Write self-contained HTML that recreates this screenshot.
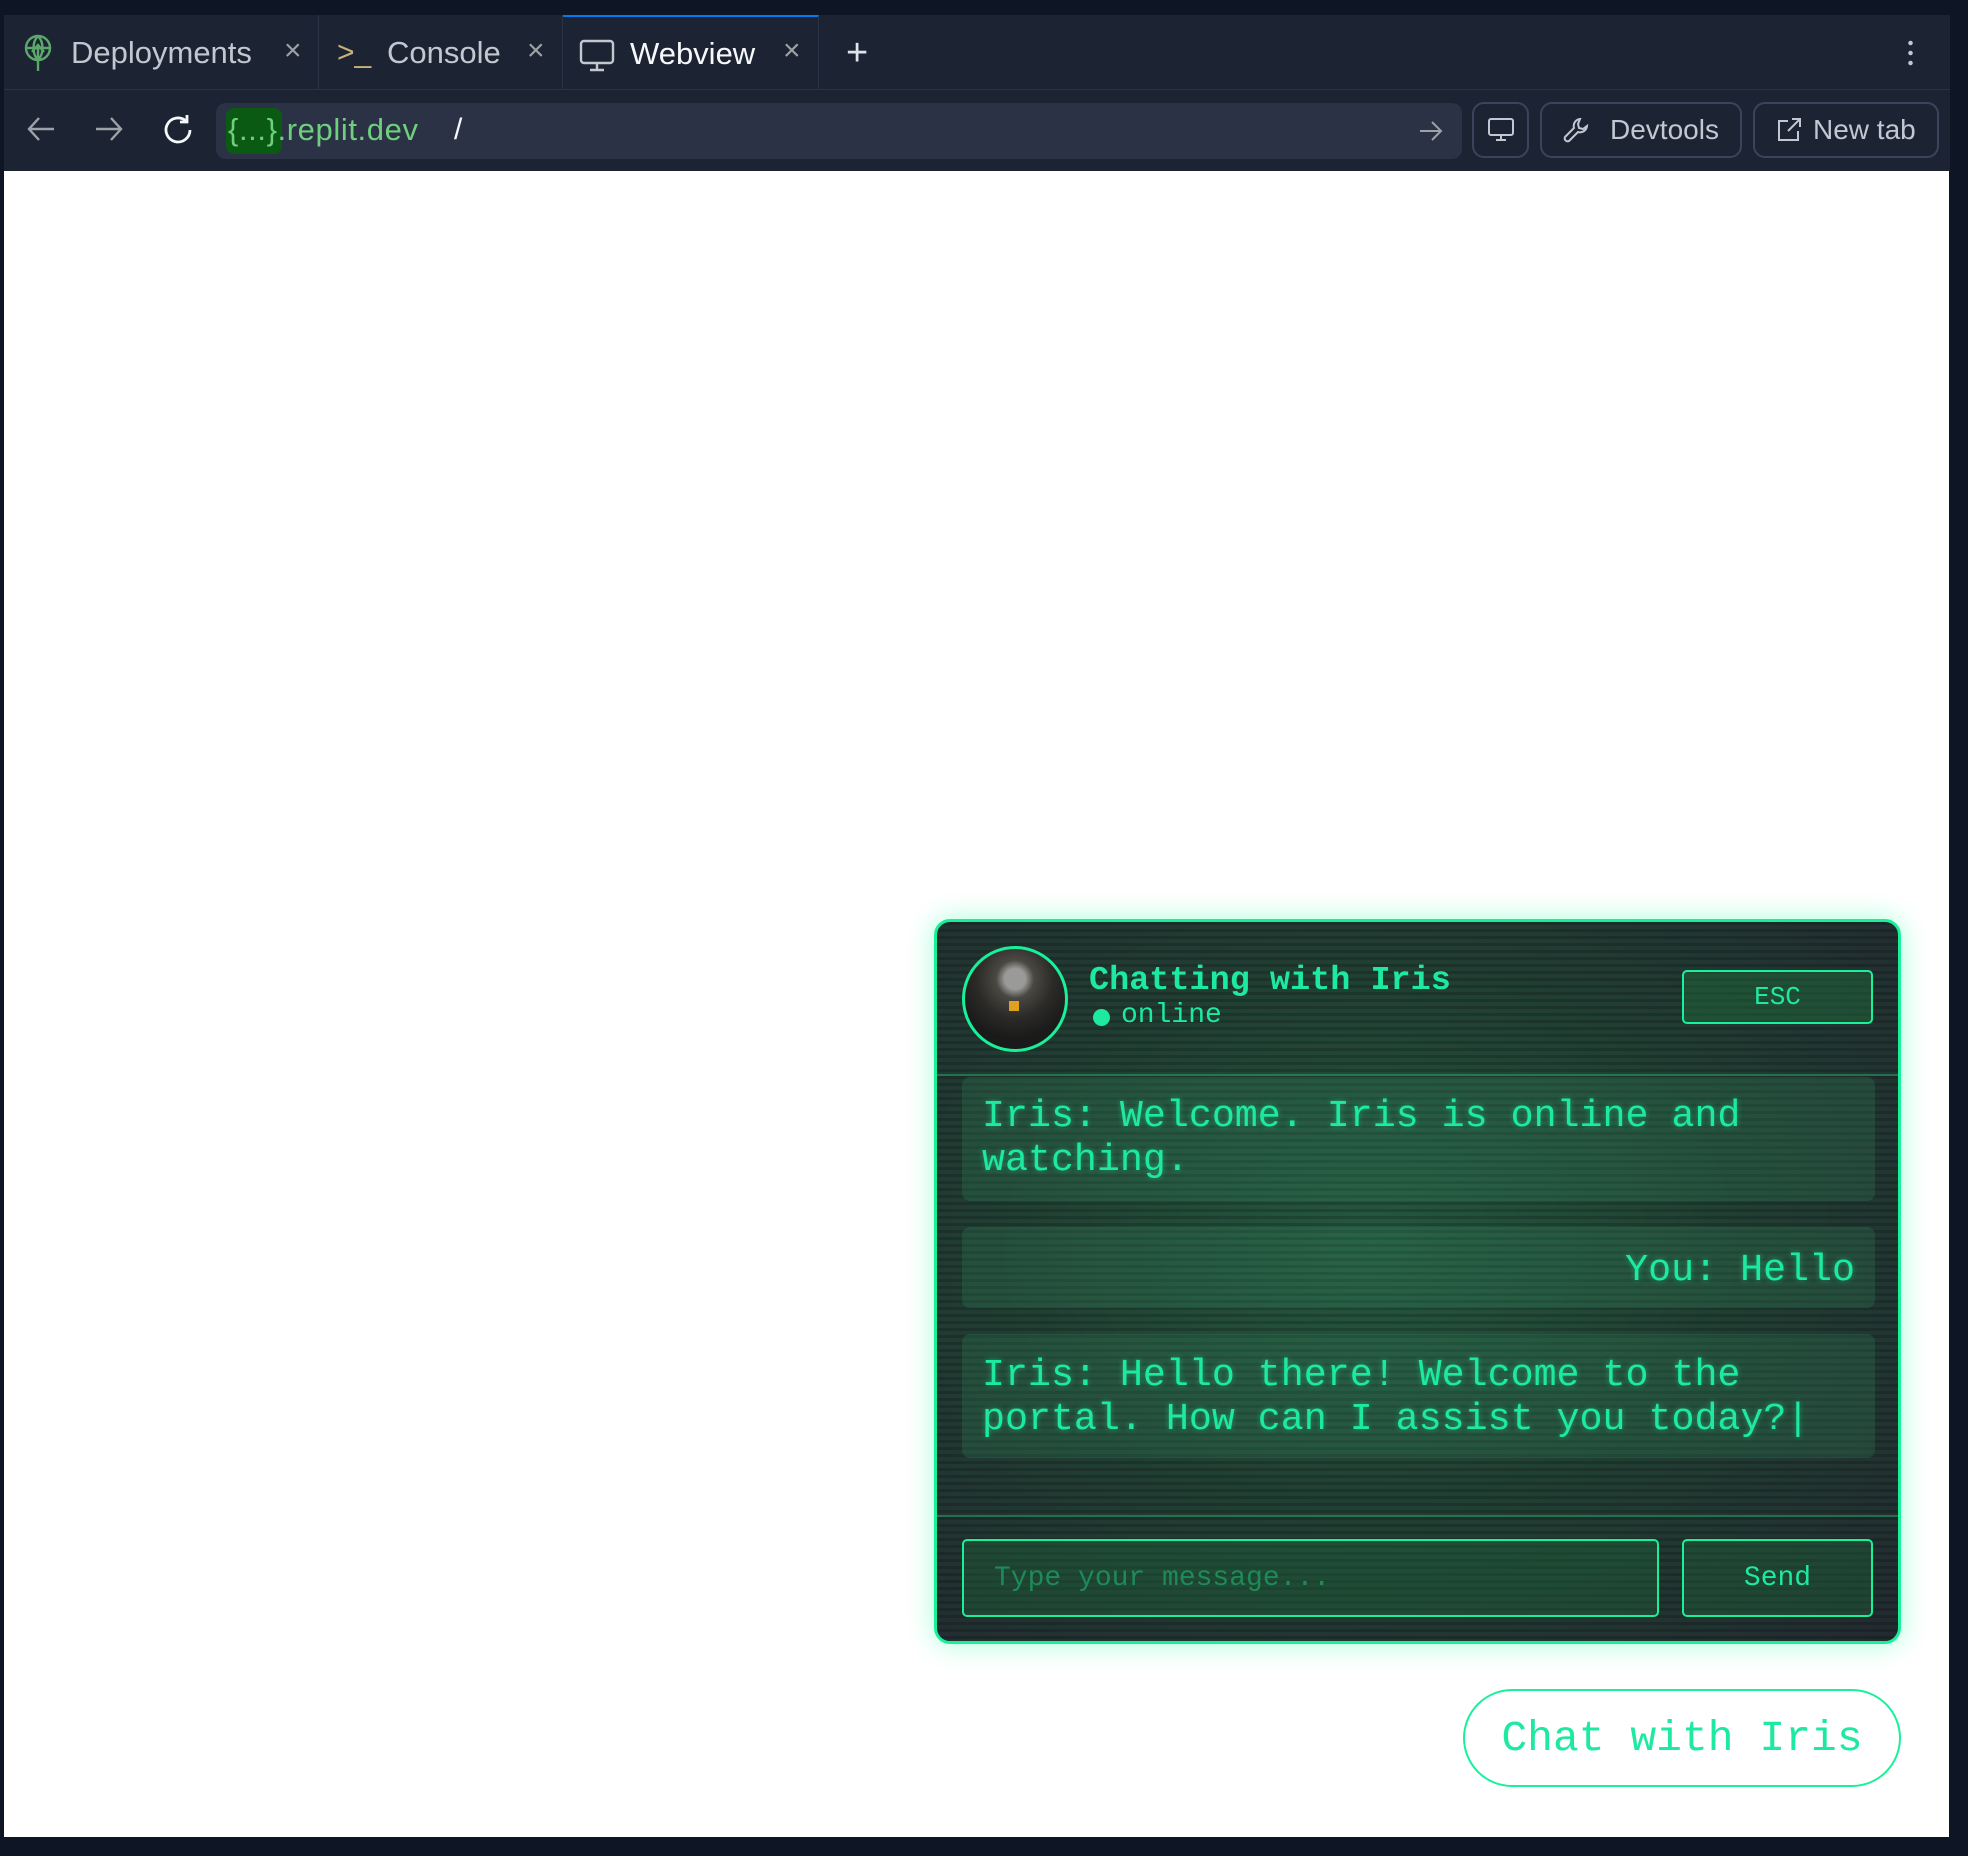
<!DOCTYPE html>
<html><head><meta charset="utf-8"><style>
*{box-sizing:border-box;margin:0;padding:0}
body{width:1968px;height:1856px;background:#0e1525;position:relative;overflow:hidden;font-family:"Liberation Sans",sans-serif}
.abs{position:absolute}
.tab{position:absolute;top:15px;height:75px;background:#1c2333;color:#c2c8d0;font-size:31px;display:flex;align-items:center;border-right:1px solid #2b3245}
.x{position:absolute;color:#9da2a6;font-size:30px;top:34px}
.btn{position:absolute;top:102px;height:56px;border:2px solid #3c445c;border-radius:12px;color:#c2c8d0;font-size:28px;display:flex;align-items:center}
.mono{font-family:"Liberation Mono",monospace}
.panel{left:934px;top:919px;width:967px;height:725px;border:3px solid #19f09a;border-radius:16px;overflow:hidden;
 box-shadow:0 0 28px rgba(0,255,150,.35);
 background:
 repeating-linear-gradient(180deg,rgba(0,0,0,.18) 0 3px,rgba(0,0,0,0) 3px 7px),
 radial-gradient(ellipse at 45% 45%,#24583e 0%,#213e33 50%,#222a30 100%)}
.msg{position:absolute;left:25px;width:913px;background:rgba(50,130,90,.28);border-radius:8px;color:#1de9a0;font-size:38.3px;line-height:44px;padding:0 20px;text-shadow:0 0 6px rgba(30,233,160,.5)}
</style></head><body>
<div class="abs" style="left:4px;top:15px;width:1946px;height:156px;background:#1c2333"></div>
<div class="tab" style="left:6px;width:313px"><svg class="abs" style="left:16px;top:18px" width="32" height="40" viewBox="0 0 32 40" fill="none" stroke="#5ca86a" stroke-width="2.4"><circle cx="16" cy="15" r="12"/><path d="M4 15h24M16 3c-6 6-6 18 0 24M16 3c6 6 6 18 0 24M16 12v26M10 19l6-7 6 7"/></svg><span style="margin-left:65px">Deployments</span></div>
<div class="x" style="left:284px">×</div>
<div class="tab" style="left:319px;width:244px"><span style="position:absolute;left:18px;color:#c8b27a;font-size:30px">&gt;_</span><span style="margin-left:68px">Console</span></div>
<div class="x" style="left:527px">×</div>
<div class="tab" style="left:563px;width:256px;border-top:2px solid #0079f2;color:#f5f9fc"><svg class="abs" style="left:16px;top:22px" width="36" height="34" viewBox="0 0 36 34" fill="none" stroke="#c2c8d0" stroke-width="2.4"><rect x="2" y="2" width="32" height="22" rx="3"/><path d="M18 24v7M11 31h14"/></svg><span style="margin-left:67px">Webview</span></div>
<div class="x" style="left:783px">×</div>
<div class="abs" style="left:846px;top:32px;color:#e0e4ea;font-size:38px">+</div>
<div class="abs" style="left:1908px;top:38px;width:5px;height:30px;background:radial-gradient(circle,#c2c8d0 2px,transparent 2.5px) 0 0/5px 10px"></div>
<div class="abs" style="left:4px;top:89px;width:1946px;height:1px;background:#2b3245"></div>
<svg class="abs" style="left:26px;top:115px" width="30" height="28" viewBox="0 0 30 28" fill="none" stroke="#9da2a6" stroke-width="2.4"><path d="M28 14H3M13 3L3 14l10 11"/></svg>
<svg class="abs" style="left:94px;top:115px" width="30" height="28" viewBox="0 0 30 28" fill="none" stroke="#9da2a6" stroke-width="2.4"><path d="M2 14h25M17 3l10 11-10 11"/></svg>
<svg class="abs" style="left:160px;top:112px" width="36" height="36" viewBox="0 0 36 36" fill="none" stroke="#f5f9fc" stroke-width="2.8"><path d="M30 18a12 12 0 1 1-4-9"/><path d="M27 3v7h-7"/></svg>
<div class="abs" style="left:216px;top:103px;width:1246px;height:56px;background:#2b3245;border-radius:10px"></div>
<div class="abs" style="left:226px;top:108px;width:56px;height:46px;background:#0b5a14;border-radius:8px"></div>
<div class="abs" style="left:228px;top:112px;color:#6ed07d;font-size:31px;letter-spacing:0.6px">{...}.replit.dev</div>
<div class="abs" style="left:454px;top:113px;color:#f5f9fc;font-size:30px">/</div>
<svg class="abs" style="left:1419px;top:120px" width="24" height="22" viewBox="0 0 24 22" fill="none" stroke="#9da2a6" stroke-width="2"><path d="M1 11h21M13 2l9 9-9 9"/></svg>
<div class="btn" style="left:1472px;width:57px;justify-content:center"><svg width="28" height="26" viewBox="0 0 28 26" fill="none" stroke="#c2c8d0" stroke-width="2"><rect x="2" y="2" width="24" height="16" rx="2"/><path d="M14 18v5M9 23h10"/></svg></div>
<div class="btn" style="left:1540px;width:202px"><svg style="margin-left:20px" width="28" height="28" viewBox="0 0 28 28" fill="none" stroke="#c2c8d0" stroke-width="2"><path d="M18 3a7 7 0 0 0-6 9L3 21a3 3 0 0 0 4 4l9-9a7 7 0 0 0 9-6l-4 3-4-1-1-4z"/></svg><span style="margin-left:20px">Devtools</span></div>
<div class="btn" style="left:1753px;width:186px"><svg style="margin-left:20px" width="28" height="28" viewBox="0 0 28 28" fill="none" stroke="#c2c8d0" stroke-width="2"><path d="M13 5H4v19h19v-9M17 3h8v8M25 3L13 15"/></svg><span style="margin-left:10px">New tab</span></div>
<div class="abs" style="left:4px;top:171px;width:1945px;height:1666px;background:#fff"></div>
<div class="abs panel">
 <div class="abs" style="left:25px;top:24px;width:106px;height:106px;border:3px solid #19f09a;border-radius:50%;background:radial-gradient(circle at 50% 30%,#9a9a98 0 12%,#4a4842 22%,#2b2a28 45%,#1a1a1a 70%);overflow:hidden"><div class="abs" style="left:44px;top:52px;width:10px;height:10px;background:#e0a020"></div></div>
 <div class="abs mono" style="left:152px;top:40px;color:#1de9a0;font-size:33.5px;font-weight:bold">Chatting with Iris</div>
 <div class="abs" style="left:156px;top:87px;width:17px;height:17px;border-radius:50%;background:#1de9a0"></div>
 <div class="abs mono" style="left:184px;top:78px;color:#1de9a0;font-size:28px">online</div>
 <div class="abs mono" style="left:745px;top:48px;width:191px;height:54px;border:2px solid #19f09a;border-radius:5px;background:rgba(30,110,60,.45);color:#1de9a0;font-size:26px;display:flex;align-items:center;justify-content:center">ESC</div>
 <div class="abs" style="left:0;top:152px;width:967px;height:2px;background:rgba(40,170,110,.5)"></div>
 <div class="msg mono" style="top:155px;height:124px;padding-top:17px">Iris: Welcome. Iris is online and watching.</div>
 <div class="msg mono" style="top:305px;height:81px;text-align:right;padding-top:21px">You: Hello</div>
 <div class="msg mono" style="top:412px;height:124px;padding-top:19px">Iris: Hello there! Welcome to the portal. How can I assist you today?|</div>
 <div class="abs" style="left:0;top:593px;width:967px;height:2px;background:rgba(40,170,110,.5)"></div>
 <div class="abs mono" style="left:25px;top:617px;width:697px;height:78px;border:2px solid #19f09a;border-radius:5px;background:rgba(30,110,60,.35);color:#1e8a58;font-size:28px;padding:22px 0 0 30px">Type your message...</div>
 <div class="abs mono" style="left:745px;top:617px;width:191px;height:78px;border:2px solid #19f09a;border-radius:5px;background:rgba(30,110,60,.35);color:#1de9a0;font-size:28px;display:flex;align-items:center;justify-content:center">Send</div>
</div>
<div class="abs mono" style="left:1463px;top:1689px;width:438px;height:98px;border:2px solid #19f09a;border-radius:49px;background:#fff;color:#1de9a0;font-size:43px;display:flex;align-items:center;justify-content:center">Chat with Iris</div>
</body></html>
